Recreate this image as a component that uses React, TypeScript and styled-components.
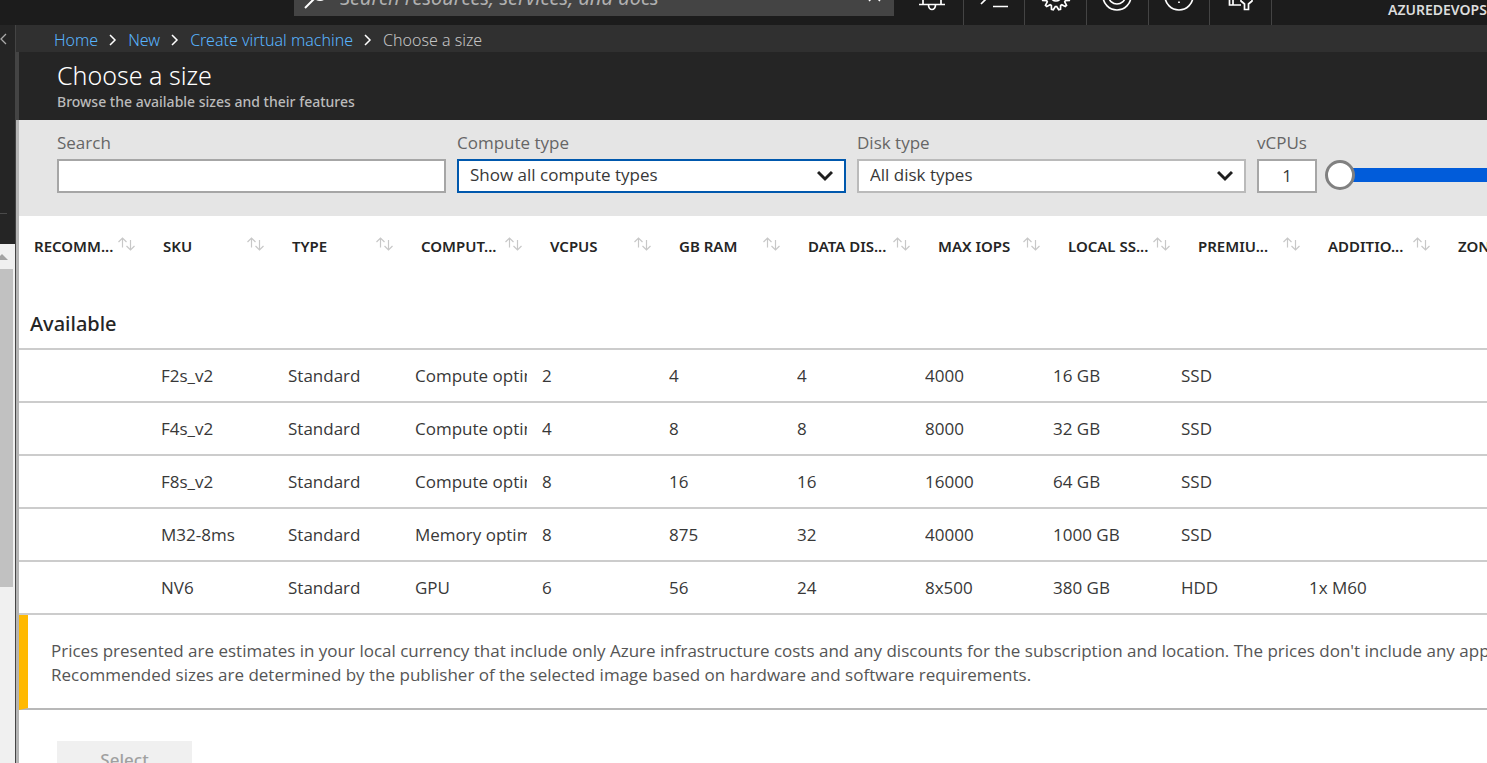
import React from 'react';
import styled, { createGlobalStyle, css } from 'styled-components';

const display = '"Noto Sans", "Open Sans", sans-serif';

const GlobalStyle = createGlobalStyle`
  * { box-sizing: border-box; }
  body {
    margin: 0;
    background: #fff;
    color: #383838;
    font-family: "Open Sans", "Noto Sans", sans-serif;
    font-size: 17px;
    font-weight: 400;
  }
  button, input, select { font: inherit; color: inherit; border-radius: 0; }
`;

const Shell = styled.div`
  display: flex;
  flex-direction: column;
  height: 100vh;
  overflow: hidden;
`;

const TopBar = styled.header`
  display: flex;
  flex: none;
  align-items: flex-end;
  height: 25px;
  padding-left: 294px;
  overflow: hidden;
  background: #1c1c1c;
  font-family: ${display};
`;

const GlobalSearch = styled.label`
  display: flex;
  flex: 0 0 600px;
  align-items: center;
  gap: 12px;
  height: 36px;
  margin-bottom: 9px;
  padding: 0 12px 2px 8px;
  background: #444;
  color: #fff;
`;

const GlobalSearchInput = styled.input`
  flex: 1;
  min-width: 0;
  padding: 0;
  border: 0;
  background: none;
  font-size: 20px;
  &::placeholder { color: #b0b0b0; font-style: italic; opacity: 1; }
`;

const TopActions = styled.nav`
  display: grid;
  grid-template-columns: repeat(6, 1fr);
  flex: 0 0 370px;
  height: 50px;
  margin-left: 8px;
`;

const TopAction = styled.button`
  display: flex;
  align-items: flex-end;
  justify-content: center;
  padding: 0 0 14px;
  border: 0;
  border-right: 1px solid #444;
  background: none;
  color: #fff;
`;

const Account = styled.span`
  flex: 1;
  min-width: 0;
  padding-left: 116px;
  margin-bottom: 5px;
  overflow: hidden;
  color: #ddd;
  font-size: 14px;
  font-weight: 600;
  line-height: 20px;
  white-space: nowrap;
`;

const Body = styled.div`
  display: flex;
  flex: 1;
  min-height: 0;
`;

const Rail = styled.aside`
  display: flex;
  flex: none;
  flex-direction: column;
  width: 16px;
  border-right: 1px solid #444;
  background: #252525;
`;

const RailHead = styled.div`
  flex: none;
  height: 189px;
  margin-right: 8px;
  border-bottom: 1px solid #4a4a4a;
  padding-top: 8px;
  color: #aaa;
`;

const CollapseButton = styled.button`
  display: block;
  padding: 0;
  border: 0;
  background: none;
  svg { display: block; }
`;

const RailScroll = styled.div`
  flex: 1;
  margin-top: 30px;
  padding-right: 2px;
  background: #f0f0f0;
`;

const ScrollArrow = styled.div`
  height: 25px;
  padding-top: 10px;
  svg { display: block; }
`;

const ScrollThumb = styled.div`
  height: 318px;
  background: #c1c1c1;
`;

const Content = styled.div`
  display: flex;
  flex: 1;
  flex-direction: column;
  min-width: 0;
`;

const Breadcrumb = styled.nav`
  display: flex;
  flex: none;
  align-items: center;
  gap: 11px;
  height: 27px;
  padding: 3px 0 0 38px;
  background: #303030;
  color: #c4c4c4;
  font-family: ${display};
  font-size: 16px;
  font-weight: 300;
  line-height: 24px;
  svg { flex: none; color: #fff; }
`;

const Crumb = styled.a`
  color: #58b4ff;
  text-decoration: none;
`;

const Blade = styled.main`
  display: flex;
  flex: 1;
  flex-direction: column;
  min-height: 0;
`;

const BladeBody = styled.div`
  flex: 1;
  min-height: 0;
  border-left: 3px solid #b5b5b5;
  overflow: hidden;
`;

const BladeHeader = styled.header`
  flex: none;
  height: 68px;
  padding: 8px 0 0 38px;
  border-left: 3px solid #444;
  background: #252525;
  font-family: ${display};
`;

const Title = styled.h1`
  margin: 0 0 2px;
  color: #fff;
  font-size: 25px;
  font-weight: 300;
  line-height: 30px;
`;

const Subtitle = styled.p`
  margin: 0;
  color: #bbb;
  font-size: 14px;
  font-weight: 500;
  line-height: 20px;
`;

const Filters = styled.form`
  display: flex;
  gap: 11px;
  height: 96px;
  padding: 10px 0 0 38px;
  overflow: hidden;
  background: #e5e5e5;
`;

const Field = styled.div<{ $width: number }>`
  flex: 0 0 ${p => p.$width}px;
`;

const Label = styled.label`
  display: block;
  height: 29px;
  color: #666;
  line-height: 26px;
`;

const control = css`
  display: block;
  width: 100%;
  height: 34px;
  border: 2px solid #a6a6a6;
  background: #fff;
  outline: 0;
`;

const TextInput = styled.input<{ $center?: boolean }>`
  ${control}
  padding: 0 8px 2px;
  text-align: ${p => (p.$center ? 'center' : 'left')};
`;

const SelectWrap = styled.div`
  position: relative;
  svg { position: absolute; right: 13px; top: 10px; pointer-events: none; }
`;

const SelectBox = styled.select<{ $active?: boolean }>`
  ${control}
  appearance: none;
  padding: 0 36px 3px 11px;
  border-color: ${p => (p.$active ? '#0058ad' : '#bababa')};
`;

const Slider = styled.input`
  flex: 0 0 280px;
  align-self: flex-start;
  height: 30px;
  margin: 30px 0 0 -3px;
  appearance: none;
  background: linear-gradient(90deg, transparent 15px, #015cda 15px) center / 100% 14px no-repeat;
  &::-webkit-slider-thumb {
    appearance: none;
    width: 30px;
    height: 30px;
    border: 3px solid #808080;
    border-radius: 50%;
    background: #fff;
  }
`;

const Table = styled.table`
  display: block;
  border-spacing: 0;
  white-space: nowrap;
`;

const Head = styled.thead`
  display: block;
  height: 60px;
  padding-left: 15px;
  color: #252525;
  font-family: ${display};
`;

const HeadRow = styled.tr`
  display: flex;
`;

const HeadCell = styled.th`
  display: flex;
  flex: 0 0 129px;
  justify-content: space-between;
  height: 60px;
  padding: 18px 28px 0 0;
  text-align: left;
  &:nth-child(n + 7) { flex-basis: 130px; }
`;

const HeadText = styled.span`
  flex: 1;
  min-width: 0;
  font-size: 15px;
  font-weight: 600;
  line-height: 24px;
`;

const SortButton = styled.button`
  flex: none;
  width: 17px;
  height: 14px;
  margin: 3px 0 0;
  padding: 0;
  border: 0;
  background: none;
  color: #c8c8c8;
  svg { display: block; }
`;

const Rows = styled.tbody`
  display: block;
`;

const Row = styled.tr`
  display: flex;
  height: 53px;
  padding-left: 15px;
  border-bottom: 2px solid #ccc;
`;

const GroupRow = styled(Row)`
  height: 74px;
  padding: 34px 0 0 11px;
`;

const GroupTitle = styled.th`
  padding: 0;
  color: #252525;
  font-family: ${display};
  font-size: 20px;
  font-weight: 500;
  line-height: 28px;
`;

const Cell = styled.td`
  flex: 0 0 128px;
  min-width: 0;
  padding: 0 15px 0 0;
  line-height: 51px;
  &:nth-child(-n + 5) { flex-basis: 127px; }
`;

const CellText = styled.div`
  overflow: hidden;
`;

const Notice = styled.aside`
  height: 95px;
  padding: 24px 0 0 23px;
  border-left: 9px solid #ffb900;
  border-bottom: 2px solid #b8b8b8;
  color: #555;
  line-height: 24px;
  white-space: nowrap;
  p { margin: 0; }
`;

const SelectButton = styled.button`
  display: block;
  width: 135px;
  height: 36px;
  margin: 31px 0 0 38px;
  border: 0;
  background: #f0f0f0;
  color: #a0a0a0;
  font-family: ${display};
  font-weight: 500;
`;

const Separator = () => (
  <svg width="8" height="12" viewBox="0 0 8 12" fill="none" stroke="currentColor" strokeWidth="1.5">
    <path d="M1 1l5 5-5 5" />
  </svg>
);

const Chevron = () => (
  <svg width="16" height="14" viewBox="0 0 16 14" fill="none" stroke="#1f1f1f" strokeWidth="3">
    <path d="M1 3l7 7 7-7" />
  </svg>
);

const SortIcon = () => (
  <svg width="17" height="14" viewBox="0 0 17 14" fill="none" stroke="currentColor" strokeWidth="1.2">
    <path d="M4.5 10.5V1M.5 5l4-4 4 4M12.500 3v9.500M8.500 9l4 4 4-4" />
  </svg>
);

const Icon = ({ children }: { children: React.ReactNode }) => (
  <svg width="30" height="30" viewBox="0 0 30 30" fill="none" stroke="currentColor" strokeWidth="1.7">
    {children}
  </svg>
);

const gearPoints = Array.from({ length: 48 }, (_, i) => {
  const r = i % 4 < 2 ? 14 : 10.5;
  const a = ((i + 1.5) / 48) * Math.PI * 2;
  return `${(15 + r * Math.sin(a)).toFixed(2)},${(15 + r * Math.cos(a)).toFixed(2)}`;
}).join(' ');

const actions = [
  { name: 'Notifications', art: <path d="M2 23.500h26M6 23V11a9 9 0 0 1 18 0v12M11.500 24a3.500 4.500 0 0 0 7 0" /> },
  { name: 'Cloud Shell', art: <path d="M2 9l7 7-7 7M14 25.500h15" /> },
  { name: 'Settings', art: <><polygon points={gearPoints} /><circle cx="15" cy="15" r="5" /></> },
  { name: 'Feedback', art: <><circle cx="15" cy="15" r="14" /><path d="M7 16a8 7 0 0 0 16 0M10 10v2M20 10v2" /></> },
  { name: 'Help', art: <><circle cx="15" cy="15" r="14" /><path d="M11 11a4 4 0 1 1 4 4v2M15 20.500v1.500" /></> },
  { name: 'Directory', art: <path d="M3 4h16M3.500 4v20H15M7 4v20M15 16v4l3.500 3v5.500h4V23l3.500-3v-4" /> },
];

const crumbs = ['Home', 'New', 'Create virtual machine'];

const columns = [
  'RECOMM...', 'SKU', 'TYPE', 'COMPUT...', 'VCPUS', 'GB RAM', 'DATA DIS...',
  'MAX IOPS', 'LOCAL SS...', 'PREMIU...', 'ADDITIO...', 'ZONES',
];

const sizes = [
  ['', 'F2s_v2', 'Standard', 'Compute optimized', '2', '4', '4', '4000', '16 GB', 'SSD', ''],
  ['', 'F4s_v2', 'Standard', 'Compute optimized', '4', '8', '8', '8000', '32 GB', 'SSD', ''],
  ['', 'F8s_v2', 'Standard', 'Compute optimized', '8', '16', '16', '16000', '64 GB', 'SSD', ''],
  ['', 'M32-8ms', 'Standard', 'Memory optimized', '8', '875', '32', '40000', '1000 GB', 'SSD', ''],
  ['', 'NV6', 'Standard', 'GPU', '6', '56', '24', '8x500', '380 GB', 'HDD', '1x M60'],
];

export default function App() {
  return (
    <Shell>
      <GlobalStyle />
      <TopBar>
        <GlobalSearch>
          <svg width="26" height="26" viewBox="0 0 26 26" fill="none" stroke="currentColor" strokeWidth="2">
            <circle cx="18" cy="9" r="7" />
            <path d="M13 14L3 24" />
          </svg>
          <GlobalSearchInput aria-label="Search" placeholder="Search resources, services, and docs" />
          <svg width="14" height="14" viewBox="0 0 14 14" fill="none" stroke="currentColor" strokeWidth="1.5">
            <path d="M1 0l11 11M12 0L1 11" />
          </svg>
        </GlobalSearch>
        <TopActions>
          {actions.map(a => (
            <TopAction key={a.name} type="button" aria-label={a.name}>
              <Icon>{a.art}</Icon>
            </TopAction>
          ))}
        </TopActions>
        <Account>AZUREDEVOPS</Account>
      </TopBar>
      <Body>
        <Rail>
          <RailHead>
            <CollapseButton type="button" aria-label="Collapse">
              <svg width="7" height="12" viewBox="0 0 7 12" fill="none" stroke="currentColor" strokeWidth="1.3">
                <path d="M6 1L1 6l5 5" />
              </svg>
            </CollapseButton>
          </RailHead>
          <RailScroll>
            <ScrollArrow>
              <svg width="8" height="6" viewBox="0 0 8 6"><path d="M-4 6l6-6 6 6z" fill="#a3a3a3" /></svg>
            </ScrollArrow>
            <ScrollThumb />
          </RailScroll>
        </Rail>
        <Content>
          <Breadcrumb aria-label="Breadcrumb">
            {crumbs.map(c => (
              <React.Fragment key={c}>
                <Crumb href="#">{c}</Crumb>
                <Separator />
              </React.Fragment>
            ))}
            <span>Choose a size</span>
          </Breadcrumb>
          <Blade>
            <BladeHeader>
              <Title>Choose a size</Title>
              <Subtitle>Browse the available sizes and their features</Subtitle>
            </BladeHeader>
            <BladeBody>
              <Filters>
                <Field $width={389}>
                  <Label htmlFor="search">Search</Label>
                  <TextInput id="search" />
                </Field>
                <Field $width={389}>
                  <Label htmlFor="compute">Compute type</Label>
                  <SelectWrap>
                    <SelectBox id="compute" $active><option>Show all compute types</option></SelectBox>
                    <Chevron />
                  </SelectWrap>
                </Field>
                <Field $width={389}>
                  <Label htmlFor="disk">Disk type</Label>
                  <SelectWrap>
                    <SelectBox id="disk"><option>All disk types</option></SelectBox>
                    <Chevron />
                  </SelectWrap>
                </Field>
                <Field $width={60}>
                  <Label htmlFor="vcpus">vCPUs</Label>
                  <TextInput id="vcpus" $center defaultValue="1" />
                </Field>
                <Slider type="range" min={1} max={128} defaultValue={1} aria-label="Minimum vCPUs" />
              </Filters>
              <Table>
                <Head>
                  <HeadRow>
                    {columns.map(c => (
                      <HeadCell key={c}>
                        <HeadText>{c}</HeadText>
                        <SortButton type="button" aria-label={`Sort by ${c}`}><SortIcon /></SortButton>
                      </HeadCell>
                    ))}
                  </HeadRow>
                </Head>
                <Rows>
                  <GroupRow><GroupTitle>Available</GroupTitle></GroupRow>
                  {sizes.map(row => (
                    <Row key={row[1]}>
                      {row.map((value, i) => <Cell key={i}><CellText>{value}</CellText></Cell>)}
                    </Row>
                  ))}
                </Rows>
              </Table>
              <Notice>
                <p>Prices presented are estimates in your local currency that include only Azure infrastructure costs and any discounts for the subscription and location. The prices don't include any applicable software costs.</p>
                <p>Recommended sizes are determined by the publisher of the selected image based on hardware and software requirements.</p>
              </Notice>
              <SelectButton type="button" disabled>Select</SelectButton>
            </BladeBody>
          </Blade>
        </Content>
      </Body>
    </Shell>
  );
}
